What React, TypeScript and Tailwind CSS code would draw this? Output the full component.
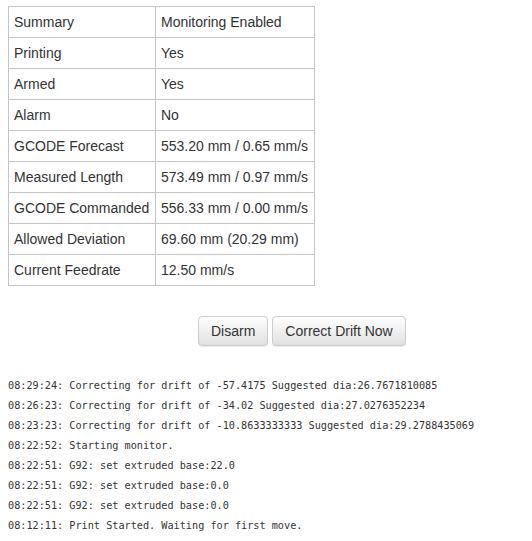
import React from "react";

const rows: [string, string][] = [
  ["Summary", "Monitoring Enabled"],
  ["Printing", "Yes"],
  ["Armed", "Yes"],
  ["Alarm", "No"],
  ["GCODE Forecast", "553.20 mm / 0.65 mm/s"],
  ["Measured Length", "573.49 mm / 0.97 mm/s"],
  ["GCODE Commanded", "556.33 mm / 0.00 mm/s"],
  ["Allowed Deviation", "69.60 mm (20.29 mm)"],
  ["Current Feedrate", "12.50 mm/s"],
];

const log = [
  "08:29:24: Correcting for drift of -57.4175 Suggested dia:26.7671810085",
  "08:26:23: Correcting for drift of -34.02 Suggested dia:27.0276352234",
  "08:23:23: Correcting for drift of -10.8633333333 Suggested dia:29.2788435069",
  "08:22:52: Starting monitor.",
  "08:22:51: G92: set extruded base:22.0",
  "08:22:51: G92: set extruded base:0.0",
  "08:22:51: G92: set extruded base:0.0",
  "08:12:11: Print Started. Waiting for first move.",
];

export default function App() {
  return (
    <div className="w-[532px] h-[541px] bg-white text-[#333] overflow-hidden" style={{ fontFamily: '"Liberation Sans", Arial, sans-serif' }}>
      <div className="pt-[6px] pl-[8px]">
        <table className="border-collapse text-[14px] leading-[20px]">
          <tbody>
            {rows.map(([k, v]) => (
              <tr key={k}>
                <td className="border border-[#c4c4c4] px-[5px] py-[5px] w-[147px]">{k}</td>
                <td className="border border-[#c4c4c4] px-[5px] py-[5px] w-[159px]">{v}</td>
              </tr>
            ))}
          </tbody>
        </table>
      </div>
      <div className="flex gap-[4px] pl-[198px] mt-[30px]">
        <button className="h-[30px] px-[12px] text-[14px] text-[#333] border border-[#ccc] rounded-[4px] bg-gradient-to-b from-white to-[#e0e0e0] shadow-[0_1px_1px_rgba(0,0,0,0.075)]">
          Disarm
        </button>
        <button className="h-[30px] px-[12px] text-[14px] text-[#333] border border-[#ccc] rounded-[4px] bg-gradient-to-b from-white to-[#e0e0e0] shadow-[0_1px_1px_rgba(0,0,0,0.075)]">
          Correct Drift Now
        </button>
      </div>
      <div className="mt-[30px] pl-[8px] text-[10.2px] leading-[20px] text-[#333] whitespace-pre" style={{ fontFamily: '"DejaVu Sans Mono", "Liberation Mono", monospace' }}>
        {log.map((l, i) => (
          <div key={i}>{l}</div>
        ))}
      </div>
    </div>
  );
}
